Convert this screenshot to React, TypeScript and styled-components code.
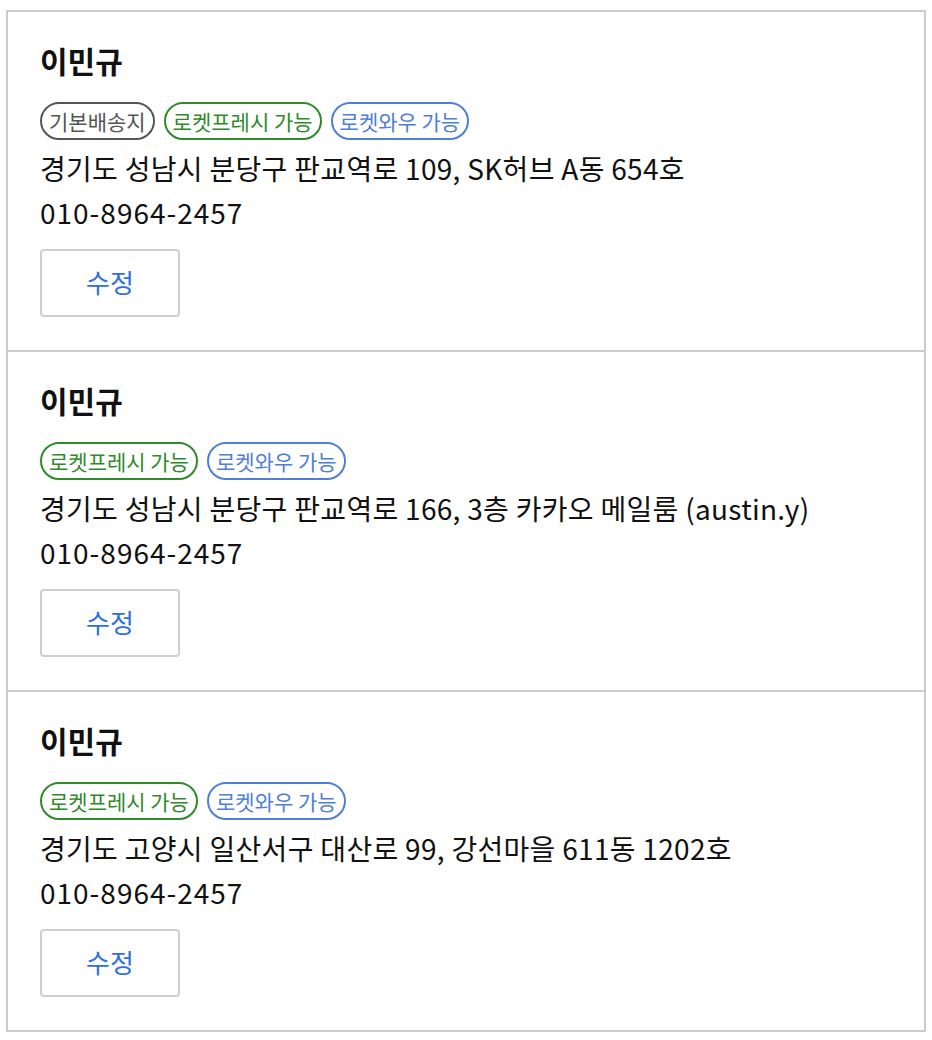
import React from "react";
import styled, { createGlobalStyle } from "styled-components";

const GlobalStyle = createGlobalStyle`
  html, body {
    margin: 0;
    padding: 0;
    background: #ffffff;
  }
  body {
    font-family: "Noto Sans CJK KR", "Noto Sans", sans-serif;
    color: #111111;
  }
`;

const Page = styled.div`
  padding: 10px 6px 0;
`;

const List = styled.ul`
  list-style: none;
  margin: 0;
  padding: 0;
  width: 920px;
  box-sizing: border-box;
  border: 2px solid #cccccc;
  border-bottom: none;
`;

const Card = styled.li`
  display: flex;
  flex-direction: column;
  align-items: flex-start;
  padding: 28px 32px 33px;
  border-bottom: 2px solid #cccccc;
`;

const Name = styled.div`
  font-size: 30px;
  font-weight: 700;
  line-height: 40px;
  color: #111111;
`;

const Tags = styled.div`
  display: flex;
  gap: 9px;
  margin-top: 22px;
`;

type Tone = "gray" | "green" | "blue";

const toneColor: Record<Tone, string> = {
  gray: "#555555",
  green: "#2f8a2a",
  blue: "#4f7fd8",
};

const Tag = styled.span<{ $tone: Tone }>`
  display: inline-flex;
  align-items: center;
  height: 38px;
  box-sizing: border-box;
  padding: 0 7px;
  border: 2px solid ${(p) => toneColor[p.$tone]};
  border-radius: 19px;
  color: ${(p) => toneColor[p.$tone]};
  font-size: 21px;
  line-height: 1;
  white-space: nowrap;
`;

const Line = styled.div<{ $spacing?: number }>`
  font-size: 28px;
  line-height: 44px;
  letter-spacing: ${(p) => p.$spacing ?? 0}px;
  color: #111111;
  white-space: nowrap;
`;

const Address = styled(Line)`
  margin-top: 6px;
`;

const EditButton = styled.button`
  margin-top: 15px;
  width: 140px;
  height: 68px;
  box-sizing: border-box;
  border: 2px solid #cfcfcf;
  border-radius: 4px;
  background: #ffffff;
  color: #2f6fe0;
  font-family: "Noto Sans CJK KR", "Noto Sans", sans-serif;
  font-size: 26px;
  padding: 0 0 4px;
  cursor: pointer;
`;

type Entry = {
  name: string;
  isDefault: boolean;
  address: string;
  phone: string;
};

const entries: Entry[] = [
  {
    name: "이민규",
    isDefault: true,
    address: "경기도 성남시 분당구 판교역로 109, SK허브 A동 654호",
    phone: "010-8964-2457",
  },
  {
    name: "이민규",
    isDefault: false,
    address: "경기도 성남시 분당구 판교역로 166, 3층 카카오 메일룸 (austin.y)",
    phone: "010-8964-2457",
  },
  {
    name: "이민규",
    isDefault: false,
    address: "경기도 고양시 일산서구 대산로 99, 강선마을 611동 1202호",
    phone: "010-8964-2457",
  },
];

export default function App() {
  return (
    <>
      <GlobalStyle />
      <Page>
        <List>
          {entries.map((e, i) => (
            <Card key={i}>
              <Name>{e.name}</Name>
              <Tags>
                {e.isDefault && <Tag $tone="gray">기본배송지</Tag>}
                <Tag $tone="green">로켓프레시 가능</Tag>
                <Tag $tone="blue">로켓와우 가능</Tag>
              </Tags>
              <Address $spacing={0.3}>{e.address}</Address>
              <Line $spacing={1}>{e.phone}</Line>
              <EditButton type="button">수정</EditButton>
            </Card>
          ))}
        </List>
      </Page>
    </>
  );
}
